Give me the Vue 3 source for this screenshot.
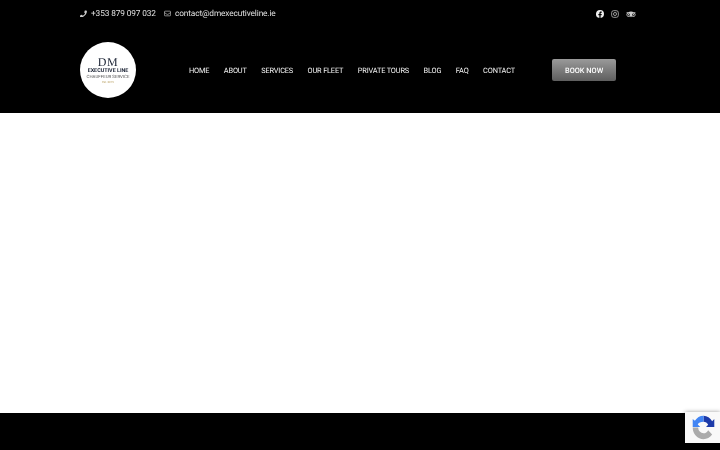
<template>
  <div class="page">
    <header class="site-header">
      <div class="top-bar">
        <div class="contact-list">
          <a class="contact-item">
            <svg class="contact-icon" viewBox="0 0 24 24" fill="currentColor"><path d="M23 2.500l-5-1.200c-.6-.1-1.100.2-1.300.7l-2.300 5.400c-.2.500-.1 1 .3 1.300l2.900 2.400c-1.700 3.600-4.600 6.500-8.200 8.200l-2.400-2.900c-.3-.4-.9-.5-1.300-.3L.3 18.900c-.5.200-.8.8-.7 1.300l1.200 5c.1.500.6.800 1 .8C13 26 23.900 15 24 2.900c0-.2-.5-.3-1-.4z"/></svg>
            +353 879 097 032
          </a>
          <a class="contact-item">
            <svg class="contact-icon" viewBox="0 0 24 24" fill="none" stroke="currentColor" stroke-width="2.200"><rect x="1.500" y="4" width="21" height="16" rx="2"/><path d="M1.500 9l8.500 5.500c1.200.8 2.800.8 4 0L22.500 9"/></svg>
            contact@dmexecutiveline.ie
          </a>
        </div>
        <div class="social-list">
          <svg class="social-icon" viewBox="0 0 24 24" fill="currentColor"><path d="M24 12a12 12 0 1 0-13.900 11.900v-8.400H7.100V12h3V9.400c0-3 1.800-4.700 4.500-4.700 1.300 0 2.700.2 2.700.2v3h-1.500c-1.500 0-2 .9-2 1.900V12h3.400l-.5 3.500h-2.900v8.400A12 12 0 0 0 24 12z"/></svg>
          <svg class="social-icon dim" viewBox="0 0 24 24" fill="none" stroke="currentColor" stroke-width="2.400"><rect x="2" y="2" width="20" height="20" rx="6"/><circle cx="12" cy="12" r="4.600"/><circle cx="17.800" cy="6.200" r="1.200" fill="currentColor" stroke="none"/></svg>
          <svg class="social-icon wide" viewBox="0 0 32 20" fill="currentColor"><path fill-rule="evenodd" d="M16 2c-3 0-6 .8-8.500 2.500H1c1 1 1.700 2.200 2 3.300A6.800 6.800 0 0 0 8 19c1.900 0 3.700-.8 5-2.100l3 3.100 3-3.100A6.900 6.900 0 0 0 24 19a6.800 6.800 0 0 0 5-11.200c.3-1.100 1-2.300 2-3.300h-6.500C22 2.800 19 2 16 2zM8 8a4.200 4.200 0 1 0 0 8.400A4.200 4.200 0 0 0 8 8zm16 0a4.200 4.200 0 1 0 0 8.400A4.200 4.200 0 0 0 24 8z"/><circle cx="8" cy="12.200" r="2"/><circle cx="24" cy="12.200" r="2"/></svg>
        </div>
      </div>
      <div class="main-bar">
        <div class="logo">
          <span class="logo-dm">DM</span>
          <span class="logo-line">EXECUTIVE LINE</span>
          <span class="logo-sub">CHAUFFEUR SERVICE</span>
          <span class="logo-est">Est. 2015</span>
        </div>
        <nav class="nav">
          <a v-for="item in navItems" :key="item">{{ item }}</a>
        </nav>
        <a class="book-btn"><span>BOOK NOW</span></a>
      </div>
    </header>
    <main class="content"></main>
    <footer class="site-footer"></footer>
    <div class="recaptcha">
      <svg viewBox="0 0 32 32" preserveAspectRatio="none">
        <path fill="#1c3aa9" d="M31 15.500V5l-3 3A15 15 0 0 0 16 1v7.500a7.500 7.500 0 0 1 6.500 4l-3 3z"/>
        <path fill="#4285f4" d="M16 1A15 15 0 0 0 4 7.500L1 5v10.500h10.500L8 12c1-2.200 4-3.500 8-3.500z"/>
        <path fill="#ababab" d="M1 16a15 15 0 0 0 15 15c4.800 0 9-2.200 12-6l-5.500-5.500c-1.300 2.500-3.500 4-6.500 4A7.500 7.500 0 0 1 8.600 16z"/>
      </svg>
    </div>
  </div>
</template>

<script setup>
const navItems = ['HOME', 'ABOUT', 'SERVICES', 'OUR FLEET', 'PRIVATE TOURS', 'BLOG', 'FAQ', 'CONTACT']
</script>

<style>
html, body {
  margin: 0;
  background: #fff;
}
</style>

<style scoped>
.page {
  position: relative;
  height: 450px;
  overflow: hidden;
  display: flex;
  flex-direction: column;
  font-family: Roboto, "Liberation Sans", sans-serif;
  text-rendering: geometricPrecision;
}

.site-header {
  background: #000;
  height: 113px;
  padding: 0 84px 0 80px;
  box-sizing: border-box;
  color: #fff;
}

.top-bar {
  height: 27px;
  display: flex;
  align-items: center;
  justify-content: space-between;
}

.contact-list {
  display: flex;
  gap: 8px;
  will-change: transform;
}

.contact-item {
  display: flex;
  align-items: center;
  gap: 4px;
  font-size: 8.300px;
  letter-spacing: -0.12px;
  line-height: 10px;
  color: #e0e0e0;
}

.contact-icon {
  width: 7px;
  height: 7px;
  margin-top: -1px;
  color: #ccc;
}

.social-list {
  display: flex;
  align-items: center;
  gap: 7px;
}

.social-icon {
  width: 8px;
  height: 8px;
  color: #eee;
}

.social-icon.dim {
  color: #bbb;
}

.social-icon.wide {
  width: 10px;
  height: 8px;
  color: #ccc;
}

.main-bar {
  display: flex;
  align-items: center;
  height: 86px;
  padding-right: 20px;
}

.logo {
  width: 56px;
  height: 56px;
  border-radius: 50%;
  background: #fff;
  display: flex;
  flex-direction: column;
  align-items: center;
  justify-content: center;
  color: #1a2233;
  line-height: 1;
  flex: none;
  will-change: transform;
}

.logo-dm {
  font-family: "Liberation Serif", serif;
  font-size: 12px;
  letter-spacing: 0.5px;
}

.logo-line {
  font-size: 5.400px;
  font-weight: 700;
  margin-top: 1.200px;
}

.logo-sub {
  font-size: 4.400px;
  color: #555;
  margin-top: 1px;
}

.logo-est {
  font-size: 2.800px;
  color: #b59b5a;
  margin-top: 1px;
}

.nav {
  display: flex;
  gap: 14.500px;
  margin-left: 53px;
  flex: 1;
  font-size: 7.400px;
  letter-spacing: -0.17px;
  color: #f4f4f4;
  will-change: transform;
}

.book-btn {
  width: 64px;
  height: 22px;
  display: flex;
  align-items: center;
  justify-content: center;
  background: linear-gradient(180deg, #9a9a9a, #5e5e5e);
  border-radius: 2px;
  color: #fff;
  font-size: 7.400px;
  font-weight: 500;
}

.book-btn span {
  will-change: transform;
}

.content {
  height: 300px;
  background: #fff;
}

.site-footer {
  flex: 1;
  background: #000;
}

.recaptcha {
  position: absolute;
  right: 0;
  top: 412px;
  width: 35px;
  height: 31px;
  background: #f9f9f9;
  box-shadow: 0 0 4px rgba(0, 0, 0, 0.4);
  display: flex;
  align-items: center;
  padding-left: 7px;
  box-sizing: border-box;
}

.recaptcha svg {
  width: 23px;
  height: 25px;
}
</style>
